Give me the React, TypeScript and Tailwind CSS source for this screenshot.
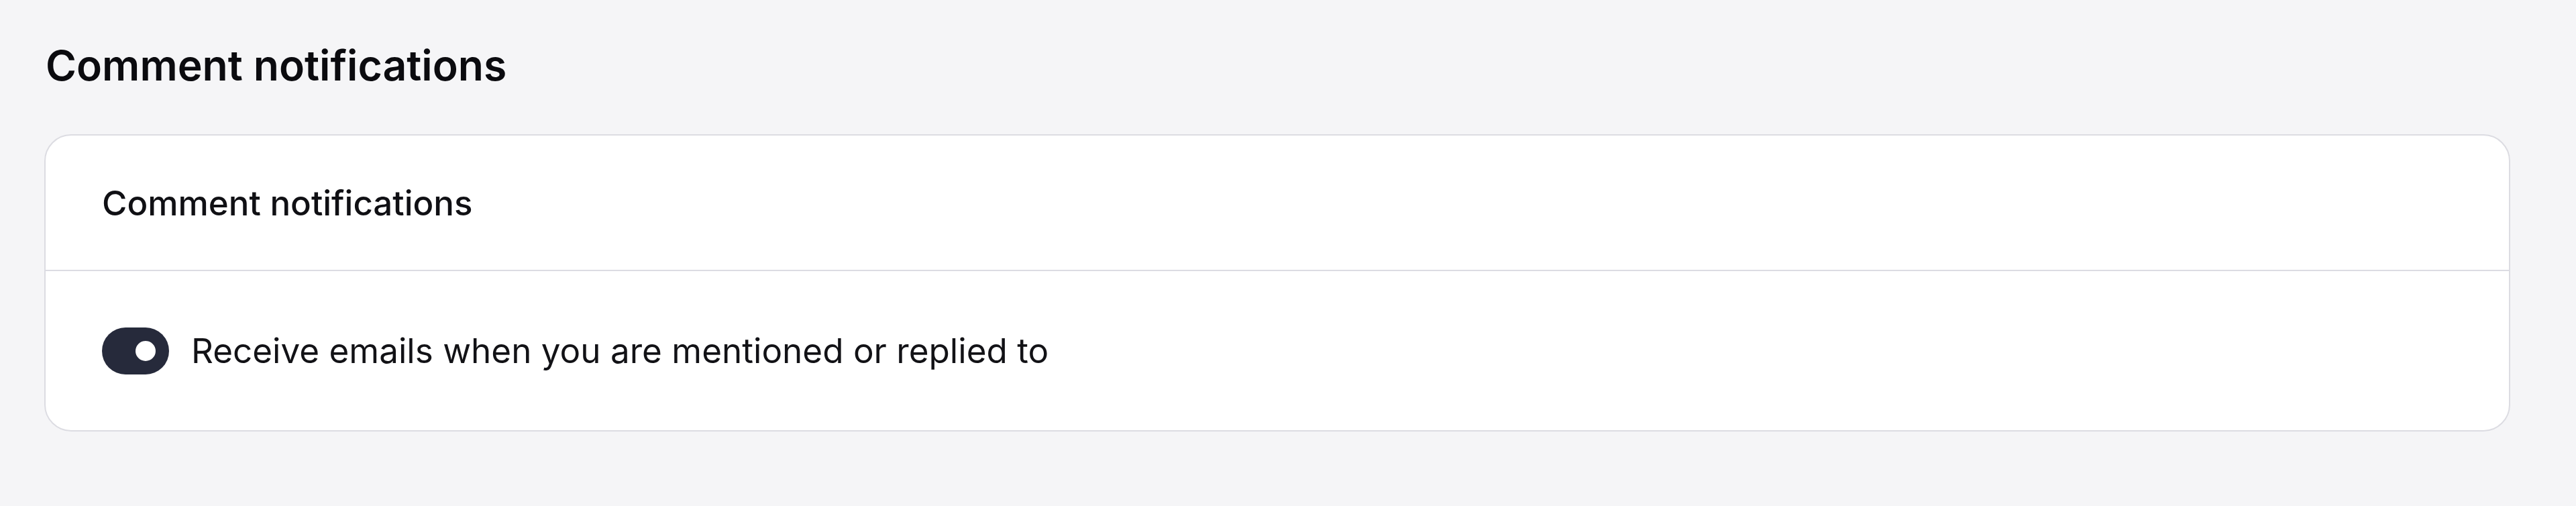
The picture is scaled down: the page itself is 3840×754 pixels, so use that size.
import { useState } from 'react';

const App = () => {
  const [enabled, setEnabled] = useState(true);

  return (
    <div
      className="min-h-screen w-full bg-[#f5f5f7] pl-[66px] pr-[98px] pt-[60px]"
      style={{ fontFamily: 'Inter, "Noto Sans", sans-serif' }}
    >
      {/* Page title */}
      <h1 className="text-[62.5px] leading-[74px] font-semibold text-[#0b0b0f] pl-[2px]">
        Comment notifications
      </h1>

      {/* Settings card */}
      <div className="mt-[66px] bg-white border-2 border-[#dcdce2] rounded-[40px]">
        <div className="h-[202px] flex items-center px-[84px] border-b-2 border-[#dcdce2]">
          <h2 className="text-[51px] leading-none font-medium text-[#101014]">Comment notifications</h2>
        </div>

        <div className="h-[237px] flex items-center px-[84px]">
          <button
            type="button"
            onClick={() => setEnabled(!enabled)}
            className={`w-[100px] h-[70px] rounded-full flex items-center px-[20px] shrink-0 ${
              enabled ? 'bg-[#262a3b] justify-end' : 'bg-[#d4d4d8] justify-start'
            }`}
          >
            <span className="block w-[30px] h-[30px] rounded-full bg-white" />
          </button>
          <span className="ml-[33px] text-[51.2px] leading-none text-[#121216]">
            Receive emails when you are mentioned or replied to
          </span>
        </div>
      </div>
    </div>
  );
};

export default App;
